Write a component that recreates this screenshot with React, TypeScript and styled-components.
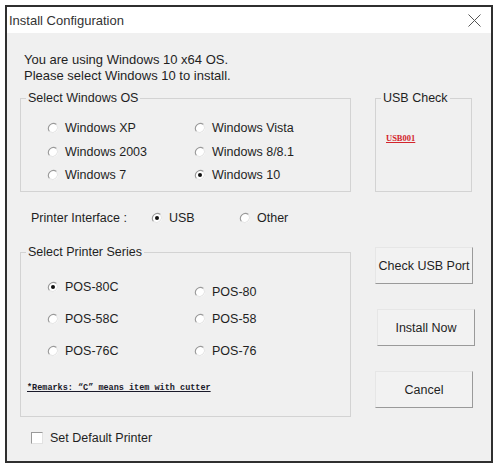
import React from "react";
import styled, { createGlobalStyle } from "styled-components";

const Global = createGlobalStyle`
  html, body { margin: 0; padding: 0; background: #ffffff; }
  body { font-family: "Liberation Sans", Arial, sans-serif; }
  * { box-sizing: border-box; }
`;

const Window = styled.div`
  margin: 5px 0 0 5px;
  width: 488px;
  height: 458px;
  border: 2px solid #2f2f2f;
  background: #f0f0f0;
  display: flex;
  flex-direction: column;
`;

const TitleBar = styled.div`
  height: 26px;
  flex: none;
  background: #ffffff;
  display: flex;
  align-items: center;
  justify-content: space-between;
  padding: 0 10px 0 2px;
  font-size: 13px;
  color: #333333;
`;

const Body = styled.div`
  display: flex;
  flex-direction: column;
  padding: 0 19px 0 13px;
  color: #1f1f1f;
  font-size: 12.5px;
`;

const Intro = styled.div`
  margin-top: 19px;
  padding-left: 4px;
  line-height: 16px;
  font-size: 13px;
`;

const Row = styled.div<{ $top: number }>`
  display: grid;
  grid-template-columns: 331px 1fr;
  column-gap: 24px;
  margin-top: ${(p) => p.$top}px;
`;

const Group = styled.fieldset<{ $bottom: number }>`
  margin: 0;
  min-width: 0;
  border: 1px solid #d3d3d3;
  padding: 0 0 ${(p) => p.$bottom}px 5px;
`;

const Legend = styled.legend`
  padding: 0 2px;
  line-height: 16px;
  font-size: 12.5px;
  color: #1f1f1f;
`;

const OptionGrid = styled.div<{ $top: number; $rows: string }>`
  display: grid;
  grid-template-columns: 147px 1fr;
  grid-template-rows: ${(p) => p.$rows};
  grid-auto-flow: column;
  margin: ${(p) => p.$top}px 0 0 21px;
`;

const Option = styled.label<{ $shift?: number }>`
  display: flex;
  align-items: center;
  gap: 6px;
  margin-top: ${(p) => p.$shift ?? 0}px;
  white-space: nowrap;
`;

const UsbTag = styled.div`
  margin: 27px 0 0 5px;
  font-family: "Liberation Serif", "Times New Roman", serif;
  font-weight: bold;
  font-size: 8.5px;
  line-height: 10px;
  color: #d3242c;
  text-decoration: underline;
`;

const InterfaceRow = styled.div`
  display: grid;
  grid-template-columns: 120px 88px auto;
  align-items: center;
  height: 20px;
  margin-top: 16px;
  padding-left: 11px;
`;

const Remark = styled.div`
  margin: 16px 0 0 1px;
  font-family: "Liberation Mono", "Courier New", monospace;
  font-weight: bold;
  font-size: 8.5px;
  line-height: 11px;
  color: #1a1a2a;
  text-decoration: underline;
`;

const ButtonColumn = styled.div`
  display: flex;
  flex-direction: column;
  gap: 25px;
  padding-top: 3px;
`;

const Button = styled.button<{ $nudge?: number }>`
  height: 37px;
  width: 98px;
  margin-left: ${(p) => p.$nudge ?? 0}px;
  background: #f2f2f2;
  border: 1px solid;
  border-color: #e6e6e6 #9a9a9a #9a9a9a #e6e6e6;
  font-family: "Liberation Sans", Arial, sans-serif;
  font-size: 12.5px;
  color: #1f1f1f;
  padding: 0;
`;

const CheckRow = styled.label`
  display: flex;
  align-items: center;
  gap: 7px;
  height: 14px;
  margin-top: 14px;
  padding-left: 11px;
`;

const Box = styled.span`
  width: 12px;
  height: 12px;
  background: #ffffff;
  border: 1px solid;
  border-color: #9a9a9a #e2e2e2 #e2e2e2 #9a9a9a;
`;

function Radio({ checked }: { checked?: boolean }) {
  return (
    <svg width="12" height="12" viewBox="0 0 12 12" style={{ flex: "none" }}>
      <circle cx="6" cy="6" r="5" fill="#ffffff" />
      <path d="M9.5 2.5 A5 5 0 0 0 2.5 9.5" fill="none" stroke="#9a9a9a" strokeWidth="1.1" />
      <path d="M2.5 9.5 A5 5 0 0 0 9.5 2.5" fill="none" stroke="#e4e4e4" strokeWidth="1" />
      {checked && <circle cx="6" cy="6" r="2" fill="#111111" />}
    </svg>
  );
}

function CloseIcon() {
  return (
    <svg width="13" height="13" viewBox="0 0 13 13">
      <path d="M0.5 0.5 L12.5 12.5 M12.5 0.5 L0.5 12.5" stroke="#555555" strokeWidth="1" />
    </svg>
  );
}

const osOptions = [
  { label: "Windows XP" },
  { label: "Windows 2003" },
  { label: "Windows 7" },
  { label: "Windows Vista" },
  { label: "Windows 8/8.1" },
  { label: "Windows 10", checked: true },
];

const printerOptions = [
  { label: "POS-80C", checked: true },
  { label: "POS-58C" },
  { label: "POS-76C" },
  { label: "POS-80", shift: 10 },
  { label: "POS-58" },
  { label: "POS-76" },
];

export default function App() {
  return (
    <>
      <Global />
      <Window>
        <TitleBar>
          <span>Install Configuration</span>
          <CloseIcon />
        </TitleBar>
        <Body>
          <Intro>
            You are using Windows 10 x64 OS.
            <br />
            Please select Windows 10 to install.
          </Intro>
          <Row $top={6}>
            <Group $bottom={4}>
              <Legend>Select Windows OS</Legend>
              <OptionGrid $top={10} $rows="24px 23px 24px">
                {osOptions.map((o) => (
                  <Option key={o.label}>
                    <Radio checked={o.checked} />
                    {o.label}
                  </Option>
                ))}
              </OptionGrid>
            </Group>
            <Group $bottom={4}>
              <Legend>USB Check</Legend>
              <UsbTag>USB001</UsbTag>
            </Group>
          </Row>
          <InterfaceRow>
            <span>Printer Interface :</span>
            <Option>
              <Radio checked />
              USB
            </Option>
            <Option>
              <Radio />
              Other
            </Option>
          </InterfaceRow>
          <Row $top={16}>
            <Group $bottom={22}>
              <Legend>Select Printer Series</Legend>
              <OptionGrid $top={11} $rows="32px 32px 32px">
                {printerOptions.map((o) => (
                  <Option key={o.label} $shift={o.shift}>
                    <Radio checked={o.checked} />
                    {o.label}
                  </Option>
                ))}
              </OptionGrid>
              <Remark>*Remarks: “C” means item with cutter</Remark>
            </Group>
            <ButtonColumn>
              <Button>Check USB Port</Button>
              <Button $nudge={2}>Install Now</Button>
              <Button>Cancel</Button>
            </ButtonColumn>
          </Row>
          <CheckRow>
            <Box />
            Set Default Printer
          </CheckRow>
        </Body>
      </Window>
    </>
  );
}
